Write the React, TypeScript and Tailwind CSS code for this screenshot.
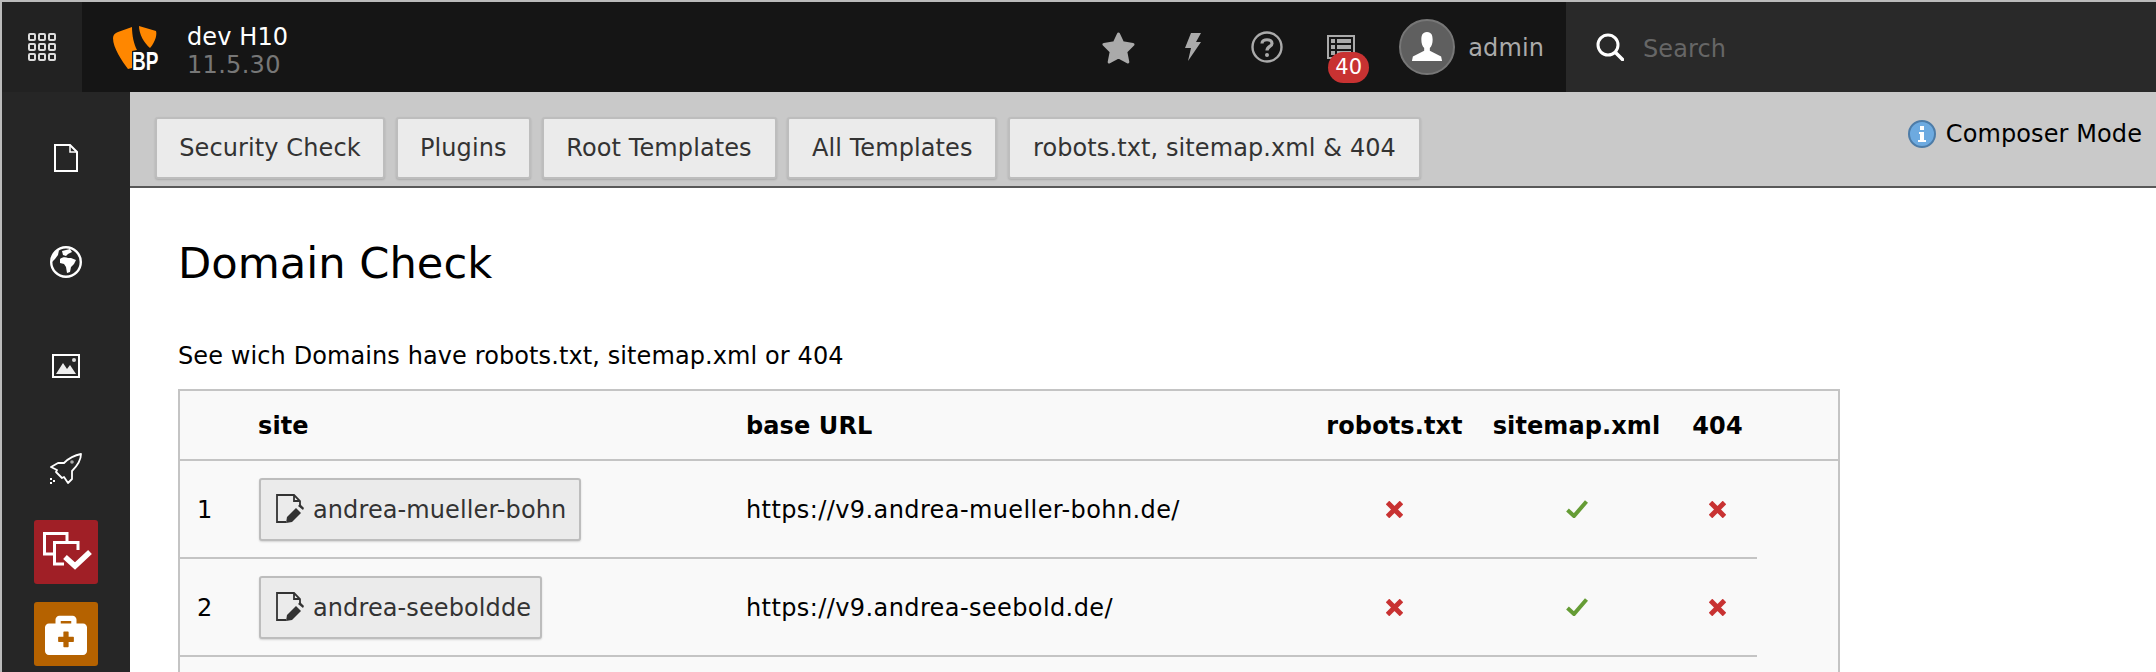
import React from "react";
import { FaBriefcaseMedical } from "react-icons/fa";

const tabs = [
  { label: "Security Check", w: "w-[230px]" },
  { label: "Plugins", w: "w-[135px]" },
  { label: "Root Templates", w: "w-[235px]" },
  { label: "All Templates", w: "w-[210px]" },
  { label: "robots.txt, sitemap.xml & 404", w: "w-[413px]" },
];

function AppsIcon() {
  const cells = Array.from({ length: 9 }, (_, i) => i);
  return (
    <svg width="28" height="28" viewBox="0 0 28 28" fill="none" stroke="#ddd" strokeWidth="2">
      {cells.map((i) => (
        <rect key={i} x={1 + (i % 3) * 10} y={1 + Math.floor(i / 3) * 10} width="6" height="6" rx="1" />
      ))}
    </svg>
  );
}

function Logo() {
  return (
    <div className="relative w-[46px] h-[46px] shrink-0">
      <svg width="46" height="46" viewBox="0 0 46 46" className="absolute left-0 top-0">
        <path d="M0 12 C0 9 2 7 5 6 L19 1 C19 10 21 18 24 24 L19 25 L19 42 L15 43 C9 35 0 22 0 12Z" fill="#ff8700" />
        <path d="M26 0 L43 5 C44 8 43 15 37 22 C31 17 26 8 26 0Z" fill="#ff8700" />
      </svg>
      <span className="absolute left-[19px] top-[25px] text-white font-bold text-[25px] leading-[20px] tracking-normal font-['Liberation_Sans',sans-serif] scale-x-[0.76] origin-left whitespace-nowrap">BP</span>
    </div>
  );
}

function DocIcon() {
  return (
    <svg width="24" height="28" viewBox="0 0 24 28" fill="none" stroke="#fff" strokeWidth="2">
      <path d="M1 1 H16 L23 8 V27 H1 Z" />
      <path d="M16 1 V8 H23" strokeWidth="1.5" />
    </svg>
  );
}

function GlobeIcon() {
  return (
    <svg width="32" height="32" viewBox="0 0 32 32" fill="#fff">
      <circle cx="16" cy="16" r="14.800" fill="none" stroke="#fff" strokeWidth="2.400" />
      <path d="M10 13 C12 11 16 11 18 12 L21 12 L26 14 L24 18 L21 21 L20 26 L17 27 L16 21 L14 18 L10 17 Z" />
      <path d="M12 5 L20 3 L22 6 L18 8 L16 10 L13 9 Z" />
      <path d="M2 16 C2 10 5 6 9 4 L8 9 L5 13 Z" />
    </svg>
  );
}

function ImageIcon() {
  return (
    <svg width="28" height="24" viewBox="0 0 28 24">
      <rect x="1" y="1" width="26" height="22" fill="none" stroke="#fff" strokeWidth="2" />
      <path d="M4 20 L11 9 L15 15 L18 11 L24 20 Z" fill="#eee" />
      <circle cx="22" cy="6" r="2" fill="#ddd" />
    </svg>
  );
}

function RocketIcon() {
  return (
    <svg width="32" height="32" viewBox="0 0 32 32" fill="none" stroke="#fff" strokeWidth="1.800" strokeLinejoin="round">
      <path d="M31 1 C25 2 19 5 14 10 L8 10 L1 14 L7 17 L6 19 L12 25 L14 24 L18 30 L22 26 L22 18 C27 13 31 7 31 1Z" />
      <circle cx="22" cy="9" r="1.800" fill="#aaa" stroke="none" />
      <path d="M0 25 h2 v2 h-2z M3 27 h2 v2 h-2z M0 29 h2 v2 h-2z" fill="#fff" stroke="none" />
    </svg>
  );
}

function ReportsIcon() {
  return (
    <svg width="64" height="64" viewBox="0 0 64 64" fill="none" stroke="#fff" strokeWidth="3">
      <path d="M20 34 H10.500 V13.500 H33 V21" />
      <path d="M30 44 H20.500 V22.500 H44 V30" />
      <path d="M31 37 L41 46 L56 32" strokeWidth="5.500" />
    </svg>
  );
}

function StarIcon() {
  return (
    <svg width="33" height="33" viewBox="0 0 32 32" fill="#aaa" stroke="#aaa" strokeWidth="3" strokeLinejoin="round" className="shrink-0">
      <path d="M16 3 L20 11.500 L30 13 L23 20 L25 30 L16 25 L7 30 L9 20 L2 13 L12 11.500 Z" />
    </svg>
  );
}

function BoltIcon() {
  return (
    <svg width="16" height="28" viewBox="0 0 16 28" fill="#aaa" className="shrink-0">
      <path d="M6 0 H16 L11 9 H16 L3 28 L6 15 H0 Z" />
    </svg>
  );
}

function HelpIcon() {
  return (
    <svg width="32" height="32" viewBox="0 0 32 32" fill="none" stroke="#aaa" className="shrink-0">
      <circle cx="16" cy="16" r="14.500" strokeWidth="2.400" />
      <path d="M11 12.500 C11 7.500 21 7.500 21 12.500 C21 15.500 16 15.500 16 19.500" strokeWidth="3.200" />
      <circle cx="16" cy="24" r="2" fill="#aaa" stroke="none" />
    </svg>
  );
}

function SearchIcon() {
  return (
    <svg width="28" height="28" viewBox="0 0 28 28" fill="none" stroke="#fff" strokeWidth="3" className="shrink-0">
      <circle cx="12" cy="12" r="10" />
      <path d="M19.500 19.500 L26.500 26.500" strokeWidth="3.500" strokeLinecap="round" />
    </svg>
  );
}

function ListIcon() {
  return (
    <svg width="28" height="24" viewBox="0 0 28 24" fill="#aaa">
      <path fillRule="evenodd" d="M0 0 H28 V24 H0 Z M2 2 V22 H26 V2 Z" />
      <rect x="4" y="4" width="4" height="4" />
      <rect x="10" y="4" width="14" height="4" />
      <rect x="4" y="10" width="4" height="4" />
      <rect x="10" y="10" width="14" height="4" />
      <rect x="4" y="16" width="4" height="4" />
      <rect x="10" y="16" width="14" height="4" />
    </svg>
  );
}

function UserIcon() {
  return (
    <svg width="32" height="32" viewBox="0 0 34 34" fill="#fff">
      <path d="M17 1 C12 1 11 5 11 9 C11 13 12 16 14 18 V21 L2 27 L1 32 H33 L32 27 L20 21 V18 C22 16 23 13 23 9 C23 5 22 1 17 1Z" />
    </svg>
  );
}

function InfoIcon() {
  return (
    <svg width="28" height="28" viewBox="0 0 28 28" className="shrink-0">
      <circle cx="14" cy="14" r="13" fill="#6daae0" stroke="#4d7ca8" strokeWidth="2" />
      <path d="M11 12 H16 V20 H18 V22 H10 V20 H12 V14 H11 Z" fill="#fff" />
      <rect x="12" y="6" width="4" height="4" fill="#fff" />
    </svg>
  );
}

function EditIcon() {
  return (
    <svg width="28" height="30" viewBox="0 0 28 30" className="shrink-0">
      <path d="M10 28 H1 V1 H18 L24 7 V11 M18 1 V7 H24" fill="none" stroke="#333" strokeWidth="1.800" />
      <path d="M10 29 L11 23 L20 14 L25 19 L16 28 Z" fill="#333" />
      <path d="M22 12 L24 10 L28 14 L27 16 Z" fill="#333" />
    </svg>
  );
}

function CrossMark() {
  return (
    <svg width="17" height="17" viewBox="0 0 17 17" className="mx-auto block" stroke="#c83232" strokeWidth="5">
      <path d="M1.500 1.500 L15.500 15.500 M15.500 1.500 L1.500 15.500" />
    </svg>
  );
}

function CheckMark() {
  return (
    <svg width="22" height="18" viewBox="0 0 22 18" fill="none" className="mx-auto block" stroke="#659c35" strokeWidth="4">
      <path d="M1.500 10 L8 16 L20.500 1.500" />
    </svg>
  );
}

const btn = "rounded-[3px] bg-[#ebebeb] border-2 border-[#bdbdbd] text-[#333] shadow-[0_1px_2px_rgba(0,0,0,0.15)]";
const cell = "border-b-2 border-[#c4c4c4]";

function Row({ n, site, url, w }: { n: number; site: string; url: string; w: string }) {
  return (
    <tr className="h-[98px]">
      <td className={`pl-[17px] pt-[2px] ${cell}`}>{n}</td>
      <td className={cell}>
        <div className={`ml-[1px] inline-flex items-center gap-[9px] h-[63px] pl-[15px] whitespace-nowrap ${w} ${btn}`}>
          <EditIcon />
          <span className="pt-[1px]">{site}</span>
        </div>
      </td>
      <td className={`pt-[2px] tracking-[0.4px] ${cell}`}>{url}</td>
      <td className={cell}><CrossMark /></td>
      <td className={cell}><CheckMark /></td>
      <td className={cell}><CrossMark /></td>
      <td />
    </tr>
  );
}

export default function App() {
  return (
    <div className="w-[2156px] h-[672px] overflow-hidden flex flex-col border-t-2 border-l-2 border-[#bbbbbb] bg-white font-['DejaVu_Sans',sans-serif] text-[24px] tracking-[0.1px] text-black">
      <header className="flex h-[90px] shrink-0 items-stretch">
        <div className="w-[80px] shrink-0 bg-[#222222] flex items-center justify-center"><AppsIcon /></div>
        <div className="w-[1484px] shrink-0 bg-[#151515] flex items-center justify-between pr-[22px]">
          <div className="flex items-center pl-[31px]">
            <div className="mt-[4px]"><Logo /></div>
            <div className="ml-[28px] flex flex-col leading-[28px] pt-[8px] whitespace-nowrap">
              <span className="text-white">dev H10</span>
              <span className="text-[#777777] tracking-[0.3px]">11.5.30</span>
            </div>
          </div>
          <div className="flex items-center">
            <StarIcon />
            <div className="ml-[50px]"><BoltIcon /></div>
            <div className="ml-[50px]"><HelpIcon /></div>
            <div className="relative ml-[44px] shrink-0">
              <ListIcon />
              <span className="absolute left-[1px] top-[17px] w-[41px] h-[31px] rounded-full bg-[#c83232] text-white text-[21px] leading-[31px] text-center">40</span>
            </div>
            <div className="ml-[44px] shrink-0 w-[56px] h-[56px] rounded-full bg-[#5f5f5f] border-2 border-[#777777] flex items-center justify-center"><UserIcon /></div>
            <span className="ml-[13px] mt-[2px] text-[#aaaaaa]">admin</span>
          </div>
        </div>
        <div className="flex-1 bg-[#292929] flex items-center pl-[30px]">
          <SearchIcon />
          <span className="ml-[19px] mt-[4px] text-[#666666]">Search</span>
        </div>
      </header>
      <div className="flex flex-1 min-h-0">
        <aside className="w-[128px] shrink-0 bg-[#262626] flex flex-col items-center pt-[14px]">
          <div className="h-[104px] flex items-center"><DocIcon /></div>
          <div className="h-[104px] flex items-center"><GlobeIcon /></div>
          <div className="h-[104px] flex items-center"><ImageIcon /></div>
          <div className="h-[102px] flex items-center"><RocketIcon /></div>
          <div className="w-[64px] h-[64px] shrink-0 rounded-[3px] bg-[#a01f26]"><ReportsIcon /></div>
          <div className="mt-[18px] w-[64px] h-[64px] shrink-0 rounded-[3px] bg-[#b56200] flex items-center justify-center"><FaBriefcaseMedical className="text-white text-[42px]" /></div>
        </aside>
        <main className="flex-1 min-w-0 flex flex-col">
          <div className="h-[96px] shrink-0 bg-[#c9c9c9] border-b-2 border-[#585858] flex items-start justify-between pl-[25px] pr-[14px]">
            <div className="flex gap-[10.750px] pt-[25px]">
              {tabs.map((t) => (
                <div key={t.label} className={`h-[62px] flex items-center justify-center whitespace-nowrap ${t.w} ${btn}`}>{t.label}</div>
              ))}
            </div>
            <div className="flex items-center gap-[10px] pt-[24px]">
              <InfoIcon />
              <span>Composer Mode</span>
            </div>
          </div>
          <div className="pl-[48px] pt-[47px]">
            <h1 className="text-[43.2px] leading-[56px] font-normal tracking-normal">Domain Check</h1>
            <p className="mt-[49px] leading-[32px]">See wich Domains have robots.txt, sitemap.xml or 404</p>
            <table className="mt-[17px] w-[1662px] table-fixed border-collapse border-2 border-[#c4c4c4] bg-[#f9f9f9]">
              <colgroup>
                <col className="w-[79px]" />
                <col className="w-[488px]" />
                <col className="w-[568px]" />
                <col className="w-[161px]" />
                <col className="w-[203px]" />
                <col className="w-[79px]" />
                <col />
              </colgroup>
              <thead>
                <tr className="h-[70px] border-b-2 border-[#c4c4c4] font-bold text-left">
                  <th />
                  <th className="font-bold pt-[2px]">site</th>
                  <th className="font-bold pt-[2px]">base URL</th>
                  <th className="font-bold pt-[2px] text-center whitespace-nowrap">robots.txt</th>
                  <th className="font-bold pt-[2px] text-center whitespace-nowrap">sitemap.xml</th>
                  <th className="font-bold pt-[2px] text-center">404</th>
                  <th />
                </tr>
              </thead>
              <tbody>
                <Row n={1} site="andrea-mueller-bohn" url="https://v9.andrea-mueller-bohn.de/" w="w-[322px]" />
                <Row n={2} site="andrea-seeboldde" url="https://v9.andrea-seebold.de/" w="w-[283px]" />
                <tr className="h-[98px]"><td colSpan={7} /></tr>
              </tbody>
            </table>
          </div>
        </main>
      </div>
    </div>
  );
}
